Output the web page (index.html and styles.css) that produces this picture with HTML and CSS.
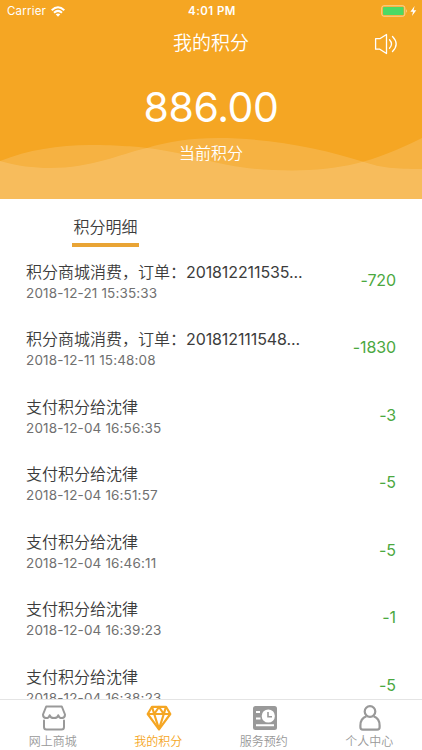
FILE: index.html
```
<!DOCTYPE html>
<html lang="zh-CN">
<head>
<meta charset="utf-8">
<title>我的积分</title>
<link rel="stylesheet" href="styles.css">
</head>
<body>
<div class="app">
  <header class="hero">
    <svg class="waves" viewBox="0 0 422 199" aria-hidden="true">
      <path d="M0 161C28 150 58 145 90 145C120 145 138 147 147 148C182 152 202 160 228 165C248 169 270 170.500 292 170.500C340 170 372 163 422 138V199H0Z"/>
      <path d="M0 161C18 166 33 168 50 168C92 168 120 154 147 148C166 142 190 138 218 138C270 138 325 149 364 162C382 168 394 169 422 169V199H0Z"/>
    </svg>
    <div class="status">
      <div class="carrier"><span>Carrier</span>
        <svg width="14" height="11" viewBox="0 0 14 11"><g fill="none" stroke="#fff" stroke-width="2"><path d="M.7 4.200Q7-1.600 13.300 4.200M3 6.700Q7 3 11 6.700"/></g><path fill="#fff" d="M7 10.800L4.700 8.300Q7 6.600 9.300 8.300Z"/></svg>
      </div>
      <div class="time">4:01 PM</div>
      <div class="power">
        <svg width="36" height="12" viewBox="0 0 36 12"><rect x=".8" y=".8" width="23" height="10.400" rx="2" fill="none" stroke="#fbd79c" stroke-width="1"/><rect x="2" y="2" width="20.600" height="8" rx="1" fill="#4cd964"/><path fill="#fbd79c" d="M25.200 4Q27 6 25.200 8Z"/><path fill="#fff" d="M33.600.9L29.400 6.700H32L31 11L35.300 5.200H32.600Z"/></svg>
      </div>
    </div>
    <div class="nav">
      <h1>我的积分</h1>
      <svg class="sound" width="24" height="22" viewBox="0 0 24 22"><g fill="none" stroke="#fff" stroke-width="1.300" stroke-linejoin="round" stroke-linecap="round"><path d="M1.600 5.700H5.800L12.500 1.500V20.500L5.800 16.200H1.600Z"/><path d="M15.500 6.800Q19.500 11 15.500 15.200M18.500 3.500Q25.800 11 18.500 18.500"/></g></svg>
    </div>
    <div class="total">886.00</div>
    <div class="caption">当前积分</div>
  </header>
  <div class="tabs"><div class="tab">积分明细</div></div>
  <main class="list">
    <div class="row"><div><div class="name">积分商城消费，订单：<span class="num">201812211535...</span></div><div class="date">2018-12-21 15:35:33</div></div><div class="amount">-720</div></div>
    <div class="row"><div><div class="name">积分商城消费，订单：<span class="num">201812111548...</span></div><div class="date">2018-12-11 15:48:08</div></div><div class="amount">-1830</div></div>
    <div class="row"><div><div class="name">支付积分给沈律</div><div class="date">2018-12-04 16:56:35</div></div><div class="amount">-3</div></div>
    <div class="row"><div><div class="name">支付积分给沈律</div><div class="date">2018-12-04 16:51:57</div></div><div class="amount">-5</div></div>
    <div class="row"><div><div class="name">支付积分给沈律</div><div class="date">2018-12-04 16:46:11</div></div><div class="amount">-5</div></div>
    <div class="row"><div><div class="name">支付积分给沈律</div><div class="date">2018-12-04 16:39:23</div></div><div class="amount">-1</div></div>
    <div class="row"><div><div class="name">支付积分给沈律</div><div class="date">2018-12-04 16:38:23</div></div><div class="amount">-5</div></div>
  </main>
  <nav class="tabbar">
    <a class="item">
      <svg width="26" height="26" viewBox="0 0 26 26"><g fill="none" stroke="currentColor" stroke-width="2" stroke-linejoin="round" stroke-linecap="round"><path d="M5.200 1.500H20.800L24 9.500C24 14 18.500 14.300 17.300 10.200C16.500 14 9.500 14 8.700 10.200C7.500 14.300 2 14 2 9.500Z"/><path d="M3 15.500V22Q3 24.500 5.500 24.500H20.500Q23 24.500 23 22V15.500"/></g></svg>
      <span>网上商城</span></a>
    <a class="item active">
      <svg width="26" height="26" viewBox="0 0 26 26"><g fill="none" stroke="currentColor" stroke-width="2.200" stroke-linejoin="round"><path d="M6 1.800H20L24.300 9L13 24.300L1.700 9Z"/><path d="M1.500 9H24.500M6 1.800L8.200 9L13 2L17.800 9L20 1.800M8.200 9L13 24L17.800 9"/></g></svg>
      <span>我的积分</span></a>
    <a class="item">
      <svg width="26" height="26" viewBox="0 0 26 26"><rect x="1" y="1" width="24" height="24" rx="2.500" fill="currentColor"/><circle cx="16.300" cy="11" r="6.600" fill="#fff"/><path d="M16 7V11.800H20" fill="none" stroke="currentColor" stroke-width="1.600"/><path d="M4 7H8M4 13.500H8.500M4 20.300H22" fill="none" stroke="#fff" stroke-width="2"/></svg>
      <span>服务预约</span></a>
    <a class="item">
      <svg width="26" height="26" viewBox="0 0 26 26"><g fill="none" stroke="currentColor" stroke-width="2.200"><circle cx="13" cy="6.500" r="5.300"/><path d="M9.500 11.200C5.500 12.500 3.400 16 3.400 20.500V22.300Q3.400 24.600 5.800 24.600H20.200Q22.600 24.600 22.600 22.300V20.500C22.600 16 20.500 12.500 16.500 11.200"/></g></svg>
      <span>个人中心</span></a>
  </nav>
</div>
</body>
</html>
```
FILE: styles.css
```
* { box-sizing: border-box; }
body { margin: 0; background: #fff; font-family: Inter, "Noto Sans CJK SC", sans-serif; }
svg { display: block; flex: none; }
.app { width: 422px; height: 750px; display: flex; flex-direction: column; overflow: hidden; }
.hero { position: relative; isolation: isolate; flex: none; height: 199px; background: #f5a623; color: #fff; text-align: center; }
.waves { position: absolute; z-index: -1; left: 0; top: 0; width: 422px; height: 199px; fill: #fff; fill-opacity: .14; }
.status { display: grid; grid-template-columns: 1fr auto 1fr; align-items: center; height: 22px; padding: 0 5px 0 7px; font-size: 11.5px; }
.carrier { display: flex; align-items: center; gap: 5px; letter-spacing: .2px; }
.time { font-weight: 600; letter-spacing: .45px; }
.power { display: flex; justify-content: flex-end; }
.nav { display: grid; grid-template-columns: 1fr auto 1fr; align-items: center; height: 42px; padding: 0 24px; }
.nav h1 { grid-column: 2; margin: 0; font-size: 19px; line-height: 42px; padding-top: 1px; height: 42px; font-weight: 350; }
.sound { justify-self: end; margin-top: 2px; }
.total { height: 76px; line-height: 86px; font-size: 41px; font-weight: 400; letter-spacing: -.4px; }
.caption { line-height: 27px; font-size: 16px; font-weight: 350; }
.tabs { flex: none; height: 48px; padding-left: 72px; }
.tab { width: 67px; height: 47.500px; border-bottom: 4px solid #e9a435; font-size: 16px; line-height: 57px; font-weight: 350; color: #3c3c3c; text-align: center; }
.list { flex: 1; min-height: 0; overflow: hidden; padding: 0 26px; color: #3c3c3c; }
.row { display: flex; justify-content: space-between; align-items: center; height: 67.5px; }
.name { height: 24px; line-height: 24px; font-size: 16px; font-weight: 350; white-space: nowrap; }
.num { font-weight: 400; letter-spacing: -.1px; }
.date { height: 18px; line-height: 18px; font-size: 13.500px; letter-spacing: .15px; color: #707070; }
.amount { padding-bottom: 2px; font-size: 16px; letter-spacing: -.1px; color: #4ba83f; }
.tabbar { flex: none; display: grid; grid-template-columns: repeat(4, 1fr); height: 51px; border-top: 1px solid #e4e4e4; background: #fff; }
.item { display: flex; flex-direction: column; align-items: center; padding-top: 5px; color: #999; font-size: 12px; font-weight: 350; line-height: 21px; }
.item svg { margin-left: 2px; }
.active { color: #f5a623; }
```
